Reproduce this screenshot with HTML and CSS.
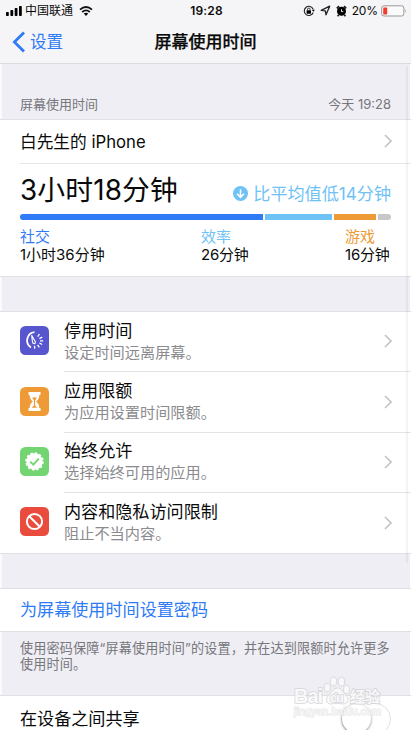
FILE: index.html
```html
<!DOCTYPE html>
<html lang="zh-CN">
<head>
<meta charset="utf-8">
<title>屏幕使用时间</title>
<link rel="stylesheet" href="styles.css">
</head>
<body>
<div class="screen">
  <header class="top">
    <div class="status">
      <div class="status-left">
        <svg width="17" height="10" viewBox="0 0 17 10"><rect x="0" y="6" width="2.8" height="4" rx=".8"/><rect x="4.4" y="4" width="2.8" height="6" rx=".8"/><rect x="8.7" y="2" width="2.8" height="8" rx=".8"/><rect x="13" y="0" width="2.8" height="10" rx=".8"/></svg>
        <span class="carrier">中国联通</span>
        <svg class="wifi" width="14" height="10" viewBox="0 0 14 10"><path d="M1 3.7Q7-1.6 13 3.7M3.2 6Q7 2.7 10.8 6" fill="none" stroke="#111" stroke-width="1.8"/><path d="M4.8 7.6Q7 5.7 9.2 7.6L7 9.9Z"/></svg>
      </div>
      <span class="clock">19:28</span>
      <div class="status-right">
        <svg width="12" height="12" viewBox="0 0 12 12"><path d="M10.2 7.5A4.6 4.6 0 1 1 10.2 4.3" fill="none" stroke="#222" stroke-width="1.1"/><path d="M8.8 4.8h3.1l-1.5 2z"/><rect x="3.6" y="5.3" width="4.4" height="3.4" rx=".4"/><path d="M4.5 5.5V4.4a1.3 1.3 0 0 1 2.6 0v1.1" fill="none" stroke="#222" stroke-width=".9"/></svg>
        <svg class="arrow" width="11" height="11" viewBox="0 0 11 11"><path d="M1.2 5.4 9.7 1.2 6 9.8 5.3 5.9Z" fill="none" stroke="#222" stroke-width="1.3" stroke-linejoin="round"/></svg>
        <svg class="alarm" width="11" height="12" viewBox="0 0 11 12"><circle cx="5.5" cy="6.3" r="4.5"/><path d="M.8 3.3 3 1.2M8 1.2l2.2 2.1M2.6 10.1l-1 1.2M8.4 10.1l1 1.2" stroke="#111" stroke-width="1.6"/><path d="M5.5 4.2v2.4H7.3" fill="none" stroke="#fff" stroke-width=".9"/></svg>
        <span class="percent">20%</span>
        <svg width="26" height="12" viewBox="0 0 26 12"><rect x=".6" y=".8" width="22.3" height="10.2" rx="2.4" fill="#fafafa" stroke="#999" stroke-width="1"/><rect x="2.2" y="2.4" width="4" height="7" rx=".7" fill="#f33b2d"/><path d="M24.2 4q1.5 1.9 0 3.8z" fill="#999"/></svg>
      </div>
    </div>
    <nav class="nav">
      <a class="back"><svg width="14" height="22" viewBox="0 0 14 22"><path d="M12 1.6 2.4 11l9.6 9.4" fill="none" stroke="#2f7bf6" stroke-width="2.8"/></svg><span>设置</span></a>
      <h1>屏幕使用时间</h1>
    </nav>
  </header>

  <div class="section-head"><span>屏幕使用时间</span><span class="today">今天 19:28</span></div>

  <section class="card">
    <div class="device"><span class="device-name">白先生的 iPhone</span><svg class="chev" viewBox="0 0 8 14"><path d="m1 1 6 6-6 6"/></svg></div>
    <div class="summary">
      <div class="total">
        <span class="big">3小时18分钟</span>
        <span class="compare"><svg width="15" height="15" viewBox="0 0 15 15"><circle cx="7.5" cy="7.5" r="7.5" fill="#6fc2f5"/><path d="M7.5 3.3v8M4 7.8l3.5 3.5L11 7.8" fill="none" stroke="#fff" stroke-width="1.6"/></svg><span class="compare-text">比平均值低14分钟</span></span>
      </div>
      <div class="bar"><i class="b1"></i><i class="b2"></i><i class="b3"></i><i class="b4"></i></div>
      <div class="cats">
        <div class="cat c1"><b>社交</b><span>1小时36分钟</span></div>
        <div class="cat c2"><b>效率</b><span>26分钟</span></div>
        <div class="cat c3"><b>游戏</b><span>16分钟</span></div>
      </div>
    </div>
  </section>

  <section class="card options">
    <div class="option">
      <svg class="icon" viewBox="0 0 29 29"><rect width="29" height="29" rx="5.5" fill="#5756ce"/><path d="M14.5 6.2a8.3 8.3 0 0 0-3.6 15.2" fill="none" stroke="#fff" stroke-width="1.8"/><path d="M11.6 9.2l3.6 6.200q.5 2-1 2.300-1.500 0-1.700-1.800z" fill="none" stroke="#fff" stroke-width="1.1"/><path d="M17.700 10.600l1.800-2.600M19.400 12.600l2.900-1.400M20 14.800h3.200M19.400 17l2.800 1.500M17.600 18.800l1.700 2.600M14.600 19.800v3" stroke="#fff" stroke-width="1.3"/></svg>
      <div class="body"><div class="text"><b>停用时间</b><span>设定时间远离屏幕。</span></div><svg class="chev" viewBox="0 0 8 14"><path d="m1 1 6 6-6 6"/></svg></div>
    </div>
    <div class="option">
      <svg class="icon" viewBox="0 0 29 29"><rect width="29" height="29" rx="5.5" fill="#ee9a36"/><path d="M8.5 5h12v3h-1.200c0 3.200-1 4.800-3.200 6.500 2.200 1.700 3.200 3.300 3.200 6.500h1.200v3h-12v-3h1.200c0-3.200 1-4.800 3.200-6.500-2.200-1.700-3.200-3.300-3.200-6.500H8.500z" fill="#fff"/><path d="M12.200 10.500h4.600q-.6 1.800-1.700 2.800v5.200l2.200 2.200h-5.600l2.200-2.200v-5.200q-1.100-1-1.700-2.800z" fill="#ee9a36"/></svg>
      <div class="body"><div class="text"><b>应用限额</b><span>为应用设置时间限额。</span></div><svg class="chev" viewBox="0 0 8 14"><path d="m1 1 6 6-6 6"/></svg></div>
    </div>
    <div class="option">
      <svg class="icon" viewBox="0 0 29 29"><rect width="29" height="29" rx="5.5" fill="#72d572"/><circle cx="14.5" cy="14.5" r="8.2" fill="#fff"/><circle cx="14.5" cy="14.5" r="8.3" fill="none" stroke="#fff" stroke-width="1.9" stroke-dasharray="2.5 1.846"/><path d="m10.300 14.700 3 3 5.500-6" fill="none" stroke="#72d572" stroke-width="1.9"/></svg>
      <div class="body"><div class="text"><b>始终允许</b><span>选择始终可用的应用。</span></div><svg class="chev" viewBox="0 0 8 14"><path d="m1 1 6 6-6 6"/></svg></div>
    </div>
    <div class="option">
      <svg class="icon" viewBox="0 0 29 29"><rect width="29" height="29" rx="5.5" fill="#e94c3d"/><circle cx="14.5" cy="14.5" r="7.6" fill="none" stroke="#fff" stroke-width="2"/><path d="m9.200 9.200 10.600 10.600" stroke="#fff" stroke-width="2"/></svg>
      <div class="body"><div class="text"><b>内容和隐私访问限制</b><span>阻止不当内容。</span></div><svg class="chev" viewBox="0 0 8 14"><path d="m1 1 6 6-6 6"/></svg></div>
    </div>
  </section>

  <section class="card passcode">为屏幕使用时间设置密码</section>
  <p class="note">使用密码保障<q>屏幕使用时间</q>的设置，并在达到限额时允许更多<br>使用时间。</p>
  <section class="card share"><span>在设备之间共享</span><span class="switch"></span></section>

  <div class="scrollbar"></div>
  <svg class="mark" width="100" height="50" viewBox="0 0 100 50">
    <g fill="#fafafa" stroke="#d6d6d9" stroke-width="1">
      <ellipse cx="39.300" cy="19.500" rx="3" ry="4.200"/><ellipse cx="45.500" cy="13.500" rx="3.200" ry="4.500"/><ellipse cx="53.500" cy="13.800" rx="3.200" ry="4.500"/><ellipse cx="58.500" cy="21.500" rx="3" ry="4.200"/>
      <path d="M49.300 20c4 0 5 4 8.500 7s3.500 9-2.500 9c-4-.8-8-.8-12 0-6 0-6-6-2.500-9s4.500-7 8.500-7z"/>
    </g>
    <g class="mark-text"><text class="mark-name" x="6" y="35" textLength="29">Bai</text><text class="mark-du" x="42" y="34" textLength="14">du</text><text class="mark-cn" x="62" y="34" textLength="30">经验</text><text class="mark-url" x="6" y="47" textLength="87">jingyan.baidu.com</text></g>
  </svg>
</div>
</body>
</html>
```
FILE: styles.css
```css
* { box-sizing: border-box; }
body { margin: 0; background: #fff; }
svg { display: block; flex: none; }
.screen {
  position: relative;
  width: 411px;
  height: 730px;
  overflow: hidden;
  background: linear-gradient(90deg, #fbfbfc 2px, #efeef4 2px, #efeef4 410px, #fff 410px);
  font-family: Inter, "Noto Sans CJK SC", sans-serif;
  font-size: 17.1px;
  color: #0a0a0a;
  white-space: nowrap;
}
.top { height: 64px; background: #f5f5f7; border-bottom: 1px solid #d9d9de; }
.status {
  display: grid;
  grid-template-columns: 1fr auto 1fr;
  align-items: center;
  height: 21px;
  padding: 0 4px 0 6px;
}
.status-left, .status-right { display: flex; align-items: center; }
.status-right { justify-content: flex-end; }
.carrier { margin-left: 2px; font-size: 12px; line-height: 20px; }
.wifi { margin-left: 6px; }
.clock { font-size: 12px; font-weight: 600; line-height: 20px; letter-spacing: .2px; }
.arrow { margin-left: 5px; }
.alarm { margin-left: 5px; }
.percent { margin: 0 3px 0 5px; font-size: 12px; line-height: 20px; letter-spacing: -.1px; }
.nav { display: grid; grid-template-columns: 1fr auto 1fr; align-items: center; height: 42px; }
.back { display: flex; align-items: center; padding-left: 12px; color: #2f7bf6; font-size: 16.5px; line-height: 24px; }
.back span { margin-left: 4px; }
.nav h1 { margin: 0; font-size: 17px; font-weight: 500; line-height: 24px; -webkit-text-stroke: .25px #0a0a0a; }
.section-head {
  display: flex;
  justify-content: space-between;
  height: 55px;
  padding: 30px 20px 0;
  font-size: 13px;
  line-height: 20px;
  color: #76767b;
}
.card { background: #fff; border-top: 1px solid #e0e0e4; border-bottom: 1px solid #e0e0e4; }
.device {
  display: flex;
  align-items: center;
  justify-content: space-between;
  height: 44px;
  margin-left: 20px;
  padding: 0 19px 1px 0;
  border-bottom: 1px solid #e6e6e9;
}
.device-name { font-size: 16.7px; }
.chev { width: 8px; height: 14px; fill: none; stroke: #c3c3c8; stroke-width: 1.6; }
.summary { height: 112px; padding: 6px 20px 0; }
.total { display: flex; align-items: center; justify-content: space-between; height: 40px; }
.big { font-size: 27.8px; line-height: 40px; letter-spacing: .15px; }
.compare { display: flex; align-items: center; padding-top: 7px; color: #6fc2f5; }
.compare-text { margin-left: 5px; line-height: 24px; }
.bar { display: flex; gap: 2px; height: 6px; margin-top: 4px; overflow: hidden; border-radius: 3px; }
.bar i { display: block; height: 6px; }
.b1 { width: 243px; background: #2f7bf6; }
.b2 { width: 67px; background: #6fc2f5; }
.b3 { width: 42px; background: #ee9a36; }
.b4 { flex: 1; background: #c7c7cc; }
.cats { display: grid; grid-template-columns: 181px 144px auto; padding-top: 8px; }
.cat { display: flex; flex-direction: column; font-size: 15px; line-height: 18px; }
.cat b { font-weight: 400; }
.c2 span, .c3 span { letter-spacing: -.2px; }
.c1 b { color: #2f7bf6; }
.c2 b { color: #6fc2f5; }
.c3 b { color: #ee9a36; }
.options { height: 243px; margin-top: 34px; }
.option { display: flex; align-items: center; height: 60.4px; padding-left: 20px; }
.icon { width: 29px; height: 29px; margin: 0 15px 3px 0; }
.body {
  display: flex;
  flex: 1;
  align-items: center;
  justify-content: space-between;
  height: 100%;
  padding-right: 19px;
  border-bottom: 1px solid #e3e3e6;
}
.option:last-child .body { border-bottom: 0; }
.option .chev { margin-bottom: 1px; }
.text { display: flex; flex-direction: column; }
.text b { font-weight: 400; line-height: 22px; }
.text span { font-size: 15.2px; line-height: 22px; color: #8b8b8f; }
.passcode { height: 44px; margin-top: 34px; padding-left: 20px; color: #2f7bf6; line-height: 42px; }
.note { height: 63px; margin: 0; padding: 8px 0 0 20px; font-size: 13.1px; line-height: 16px; letter-spacing: .16px; color: #76767b; }
.note q { quotes: "“" "”"; }
.share { display: flex; align-items: center; justify-content: space-between; height: 44px; padding: 0 20px; }
.switch {
  width: 50px;
  height: 32px;
  margin-top: 3px;
  border: 1.5px solid #e2e2e4;
  border-radius: 16px;
}
.switch::before {
  content: "";
  display: block;
  width: 29px;
  height: 29px;
  border-radius: 50%;
  background: #fff;
  box-shadow: 0 1px 3px rgba(0, 0, 0, .45);
}
.scrollbar { position: absolute; left: 406px; top: 66px; width: 2px; height: 497px; background: rgba(0, 0, 0, .045); }
.mark { position: absolute; left: 288px; top: 668px; opacity: .85; }
.mark-text {
  font-family: "Liberation Sans", "Noto Sans CJK SC", sans-serif;
  fill: #fafafa;
  stroke: #d2d2d6;
  stroke-width: 1.6px;
  paint-order: stroke;
}
.mark-name { font-size: 20px; font-weight: 700; }
.mark-du { font-size: 13px; font-weight: 700; }
.mark-cn { font-size: 15px; font-weight: 700; }
.mark-url { font-size: 10.5px; stroke-width: 1px; stroke: #dedee1; }
```
